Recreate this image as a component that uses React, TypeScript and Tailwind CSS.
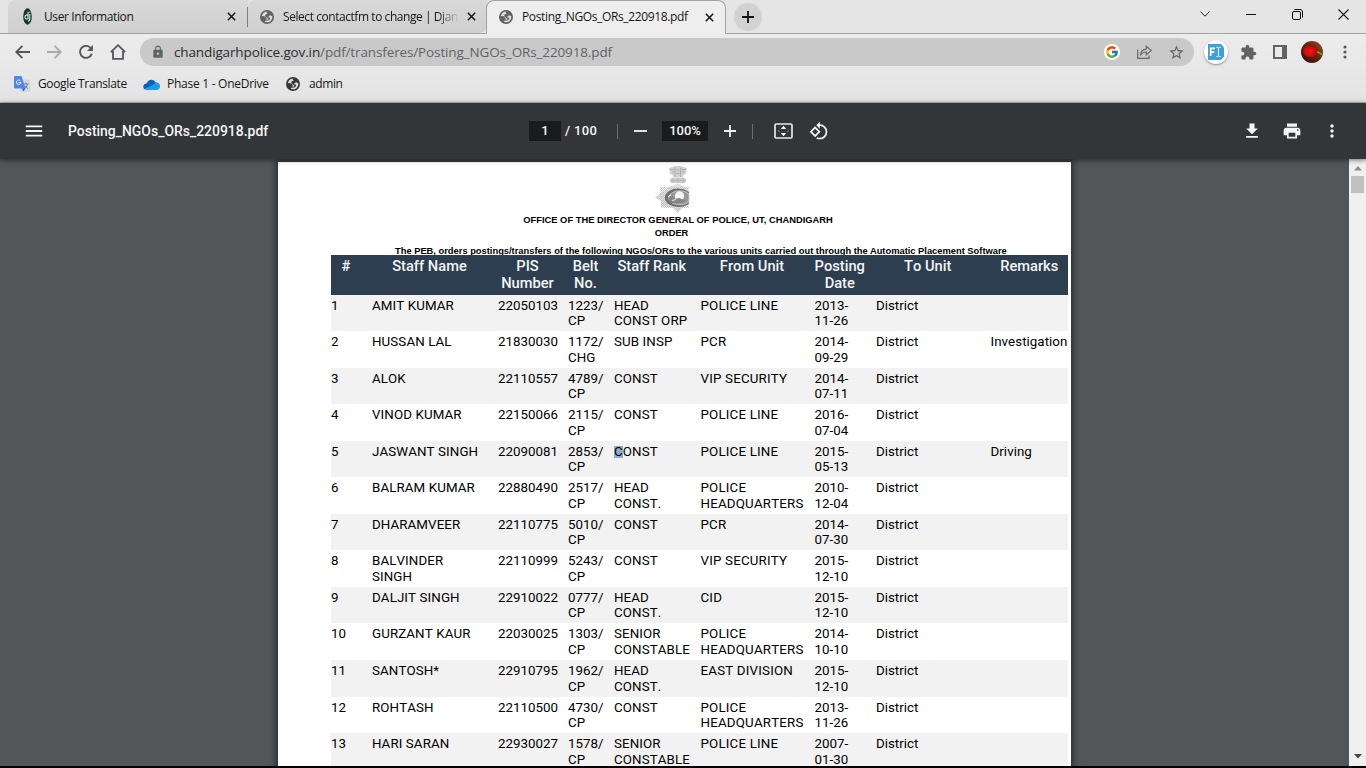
import React from "react";
import { MdLock, MdStarBorder, MdExtension, MdMenu, MdPrint, MdMoreVert, MdFileDownload, MdRotate90DegreesCcw } from "react-icons/md";
import { FcGoogle } from "react-icons/fc";

type Row = [string, string, string, string, string, string, string, string];

const rows: Row[] = [
  ["AMIT KUMAR", "22050103", "1223/|CP", "HEAD|CONST ORP", "POLICE LINE", "2013-|11-26", "District", ""],
  ["HUSSAN LAL", "21830030", "1172/|CHG", "SUB INSP", "PCR", "2014-|09-29", "District", "Investigation"],
  ["ALOK", "22110557", "4789/|CP", "CONST", "VIP SECURITY", "2014-|07-11", "District", ""],
  ["VINOD KUMAR", "22150066", "2115/|CP", "CONST", "POLICE LINE", "2016-|07-04", "District", ""],
  ["JASWANT SINGH", "22090081", "2853/|CP", "CONST", "POLICE LINE", "2015-|05-13", "District", "Driving"],
  ["BALRAM KUMAR", "22880490", "2517/|CP", "HEAD|CONST.", "POLICE|HEADQUARTERS", "2010-|12-04", "District", ""],
  ["DHARAMVEER", "22110775", "5010/|CP", "CONST", "PCR", "2014-|07-30", "District", ""],
  ["BALVINDER|SINGH", "22110999", "5243/|CP", "CONST", "VIP SECURITY", "2015-|12-10", "District", ""],
  ["DALJIT SINGH", "22910022", "0777/|CP", "HEAD|CONST.", "CID", "2015-|12-10", "District", ""],
  ["GURZANT KAUR", "22030025", "1303/|CP", "SENIOR|CONSTABLE", "POLICE|HEADQUARTERS", "2014-|10-10", "District", ""],
  ["SANTOSH*", "22910795", "1962/|CP", "HEAD|CONST.", "EAST DIVISION", "2015-|12-10", "District", ""],
  ["ROHTASH", "22110500", "4730/|CP", "CONST", "POLICE|HEADQUARTERS", "2013-|11-26", "District", ""],
  ["HARI SARAN", "22930027", "1578/|CP", "SENIOR|CONSTABLE", "POLICE LINE", "2007-|01-30", "District", ""],
];

const headers = ["#", "Staff Name", "PIS|Number", "Belt|No.", "Staff Rank", "From Unit", "Posting|Date", "To Unit", "Remarks"];
const SELECTED_ROW = 4;
const RANK_COLUMN = 3;
const columns = "grid grid-cols-[41px_126px_70px_46px_86.5px_114px_61.5px_114.5px_77.5px]";
const cellTracking = [
  "tracking-[0.1px]",
  "",
  "",
  "tracking-[0.1px]",
  "tracking-[0.18px]",
  "",
  "",
  "tracking-[0.05px]",
];

function Lines({ text }: { text: string }) {
  return (
    <>
      {text.split("|").map((line, i) => (
        <div key={i} className="whitespace-nowrap">{line}</div>
      ))}
    </>
  );
}

function Globe({ color }: { color: string }) {
  return (
    <svg width="14" height="14" viewBox="0 0 14 14" className="shrink-0">
      <circle cx="7" cy="7" r="7" fill={color} />
      <path d="M6.3 1.6C4.6 2 3.2 3 2.5 4.4L1.8 6.1L4.6 6.2L6.6 8.1L6.4 9.6L8.2 9.7L8.3 8.6C6.7 8 6.2 6.8 5.2 6.3L5.4 4.5L7.6 3.8L7 2.8Z" fill="#dedede" />
      <path d="M8.4 6.3L10.2 5.2L12.3 6.2C12.5 9 11 11.6 8.2 12.3L5 12L5.2 10.7L8.6 10.6L10.2 9L9.8 7.6L8.6 7.5Z" fill="#dedede" />
    </svg>
  );
}

function Close() {
  return (
    <svg width="9" height="9" viewBox="0 0 9 9" className="shrink-0">
      <path d="M0.8 0.8L8.2 8.2M8.2 0.8L0.8 8.2" stroke="#111" strokeWidth="1.5" />
    </svg>
  );
}

function Slot({ children }: { children: React.ReactNode }) {
  return <div className="flex h-7 w-8 shrink-0 items-center justify-center">{children}</div>;
}

function TabStrip() {
  return (
    <div className="flex h-[34px] shrink-0 border-b border-[#a3a3a6] bg-[#e5e5e5] font-['Open_Sans',sans-serif] text-[12px] text-[#161616]">
      <div className="ml-2 flex h-[33px] w-[240px] shrink-0 items-center rounded-tl-[8px] bg-linear-to-b from-[#d9d9d9] to-[#cfcfcf]">
        <svg width="9" height="17" viewBox="0 0 9 17" className="ml-[15px] shrink-0">
          <ellipse cx="4.5" cy="8.5" rx="4.3" ry="8.3" fill="#143a2b" />
          <path d="M5 3.8V10.8C3.2 11.5 2 10.7 2 9C2 7.4 3.2 6.6 5 7.2M6.8 6V10.5C6.8 12.3 6.2 13 5 13.2M6.8 3.8V4.8" stroke="#e8f1ed" strokeWidth="1.1" fill="none" />
        </svg>
        <span className="ml-[12px] w-[183px] whitespace-nowrap tracking-[-0.4px]">User Information</span>
        <Close />
        <span className="ml-auto h-5 w-px bg-[#7d7d7d]" />
      </div>
      <div className="flex h-[33px] w-[239px] shrink-0 items-center rounded-tl-[8px] rounded-br-[8px] bg-linear-to-b from-[#d9d9d9] to-[#cfcfcf]">
        <span className="ml-3"><Globe color="#5f6368" /></span>
        <span className="ml-[9px] mr-[8px] w-[176px] whitespace-nowrap tracking-[-0.44px] [mask-image:linear-gradient(to_right,black_88%,transparent)]">Select contactfm to change | Djan</span>
        <Close />
      </div>
      <div className="relative -ml-px flex h-[34px] w-[240px] shrink-0 items-center rounded-t-[8px] border border-b-0 border-[#a3a3a6] bg-[#eeeeee] pb-px">
        <span className="ml-3"><Globe color="#5f6368" /></span>
        <span className="ml-[9px] w-[183px] whitespace-nowrap tracking-[-0.36px]">Posting_NGOs_ORs_220918.pdf</span>
        <Close />
      </div>
      <div className="mt-[3px] ml-[8px] flex size-7 items-center justify-center rounded-full bg-[#d2d2d2]">
        <svg width="12" height="12" viewBox="0 0 12 12"><path d="M6 0V12M0 6H12" stroke="#111" strokeWidth="1.8" /></svg>
      </div>
      <div className="ml-auto flex h-[28px] w-[184px]">
        <div className="flex w-[46px] items-center justify-center"><svg width="10" height="6" viewBox="0 0 10 6"><path d="M0.4 0.5L5 5.2L9.6 0.5" stroke="#222" fill="none" /></svg></div>
        <div className="flex w-[46px] items-center justify-center"><svg width="10" height="2" viewBox="0 0 10 2"><path d="M0 1.5H10" stroke="#111" /></svg></div>
        <div className="flex w-[46px] items-center justify-center"><svg width="11" height="11" viewBox="0 0 11 11"><rect x="0.5" y="2.5" width="8" height="8" rx="1.5" fill="none" stroke="#111" /><path d="M2.5 0.5H8C9.6 0.5 10.5 1.4 10.5 3V8.5" stroke="#111" fill="none" /></svg></div>
        <div className="flex w-[46px] items-center justify-center"><svg width="11" height="11" viewBox="0 0 11 11"><path d="M0.5 0.5L10.5 10.5M10.5 0.5L0.5 10.5" stroke="#111" strokeWidth="1.1" /></svg></div>
      </div>
    </div>
  );
}

function AddressBar() {
  return (
    <div className="flex h-9 shrink-0 items-center pl-[6px] text-[#5f6368]">
      <Slot><svg width="15" height="14" viewBox="0 0 15 14"><path d="M15 7H1.6M7.4 0.8L1.3 7L7.4 13.2" stroke="#54575b" strokeWidth="1.9" fill="none" /></svg></Slot>
      <Slot><svg width="15" height="14" viewBox="0 0 15 14"><path d="M0 7H13.4M7.6 0.8L13.7 7L7.6 13.2" stroke="#a9abad" strokeWidth="1.9" fill="none" /></svg></Slot>
      <Slot><svg width="14" height="14" viewBox="0 0 14 14"><path d="M11.9 3.3A6 6 0 1 0 12.8 8.6" stroke="#54575b" strokeWidth="1.9" fill="none" /><path d="M14 0V6H8Z" fill="#54575b" /></svg></Slot>
      <Slot><svg width="16" height="16" viewBox="0 0 16 16"><path d="M0.8 8.2L8 1.2L15.2 8.2M3 7V14.8H13V7" stroke="#54575b" strokeWidth="1.8" fill="none" /></svg></Slot>
      <div className="ml-[6px] flex h-7 w-[1054px] shrink-0 items-center rounded-full bg-[#c9c9c9] pr-[2px]">
        <MdLock className="ml-[11px] size-[14px] shrink-0" />
        <span className="ml-[9px] whitespace-nowrap font-['Open_Sans',sans-serif] text-[13.5px] leading-[15px] tracking-[-0.13px]"><span className="text-[#2a2c2e]">chandigarhpolice.gov.in</span>/pdf/transferes/Posting_NGOs_ORs_220918.pdf</span>
        <div className="ml-auto flex">
          <Slot><span className="flex size-4 items-center justify-center rounded-full bg-white"><FcGoogle className="size-[14px]" /></span></Slot>
          <Slot><svg width="15" height="14" viewBox="0 0 15 14" fill="none" stroke="#66696d" strokeWidth="1.2"><path d="M0.7 4.5V13.3H12V10.5" /><path d="M3.3 10.3C3.8 6.2 6 4.2 9.3 4.1V1.2L14.3 5.6L9.3 9.8V7C6.7 7 4.8 8 3.3 10.3Z" /></svg></Slot>
          <Slot><MdStarBorder className="size-[17px]" /></Slot>
        </div>
      </div>
      <div className="ml-[6px] flex">
        <Slot>
          <span className="flex size-6 items-center justify-center rounded-full bg-white shadow-[0_1px_2px_#0006]">
            <svg width="16" height="16" viewBox="0 0 16 16"><path d="M0 0H13L16 3.5V12.5L13 16H0Z" fill="#409fdb" /><path d="M2.7 12V4.4H7M2.7 8.1H6.3" stroke="#fff" strokeWidth="1.7" fill="none" /><path d="M8.3 3.4H9.5L10.5 4L11.5 3.4H12.7M10.5 4V12M8.3 12.6H9.5L10.5 12L11.5 12.6H12.7" stroke="#fff" strokeWidth="1" fill="none" /></svg>
          </span>
        </Slot>
        <Slot><MdExtension className="size-[17px]" /></Slot>
        <Slot><svg width="14" height="14" viewBox="0 0 14 14"><rect x="1" y="1" width="12" height="12" fill="none" stroke="#5f6368" strokeWidth="2" /><rect x="9" width="5" height="14" fill="#5f6368" /></svg></Slot>
        <Slot><svg width="22" height="22" viewBox="0 0 22 22">
          <defs>
            <radialGradient id="petal"><stop offset="0" stopColor="#f01818" /><stop offset="0.75" stopColor="#cf0a0c" /><stop offset="1" stopColor="#901008" /></radialGradient>
            <linearGradient id="soil" x1="0" y1="1" x2="1" y2="0"><stop offset="0" stopColor="#2c0c04" /><stop offset="0.5" stopColor="#5a260c" /><stop offset="1" stopColor="#8b5529" /></linearGradient>
          </defs>
          <circle cx="11" cy="11" r="11" fill="url(#soil)" />
          <path d="M2 8C3 4.5 7 3.6 9.5 4.4C13 3.8 16.5 6 16.5 10C16.5 14 14 16.5 10 16.5C5 17 0.5 13 2 8Z" fill="url(#petal)" />
          <path d="M16 11.5C18 10.5 19 13 21 13.4" stroke="#7fb51e" strokeWidth="1.5" fill="none" />
        </svg></Slot>
        <Slot><svg width="4" height="14" viewBox="0 0 4 14" className="ml-px" fill="#54575b"><circle cx="2" cy="2" r="1.6" /><circle cx="2" cy="7" r="1.6" /><circle cx="2" cy="12" r="1.6" /></svg></Slot>
      </div>
    </div>
  );
}

function Bookmarks() {
  return (
    <div className="flex h-[33px] shrink-0 items-center border-b border-[#b9b9bb] pl-[14px] pb-[4px] font-['Open_Sans',sans-serif] text-[12px] text-[#161616]">
      <svg width="16" height="16" viewBox="0 0 16 16" className="shrink-0">
        <rect x="6" y="3.5" width="10" height="12" rx="1" fill="#d3d5d8" />
        <path d="M9.5 8H14.5M12 6.5V8M13.5 8C13 10.5 11.5 12 10 12.8M11 9.5C11.8 11 13 12 14 12.5" stroke="#7a8087" fill="none" />
        <path d="M1 0H7.5L11.5 12.5H1A1 1 0 0 1 0 11.5V1A1 1 0 0 1 1 0Z" fill="#4a87ee" />
        <path d="M8 12.5H11.5L9.3 15.5Z" fill="#2e5cc8" />
        <path d="M6.3 4.8A2.2 2.2 0 1 0 6.8 6.5H4.8" stroke="#fff" strokeWidth="1" fill="none" />
      </svg>
      <span className="ml-2 w-[105px] whitespace-nowrap tracking-[-0.35px]">Google Translate</span>
      <svg width="17" height="11" viewBox="0 0 17 11" className="shrink-0">
        <path d="M3.8 4.2C5 0.2 10.5 -1 12.8 3.6L16.3 6.5L9 9L1.4 10.2C-0.8 8.2 0.3 4.5 3.8 4.2Z" fill="#0a62b8" />
        <path d="M3.8 4.2C6 3.8 7.5 5.3 9.3 6.2L12.8 3.6C15.4 3.4 17 5.2 17 7.3C17 9.4 15.6 11 13.6 11H3.9C2.8 11 1.9 10.7 1.3 10L9.3 6.2Z" fill="#209be8" />
      </svg>
      <span className="ml-[7px] w-[119px] whitespace-nowrap tracking-[-0.27px]">Phase 1 - OneDrive</span>
      <Globe color="#36393c" />
      <span className="ml-[9px] tracking-[-0.4px]">admin</span>
    </div>
  );
}

function PdfToolbar() {
  return (
    <div className="relative z-10 flex h-14 shrink-0 items-center bg-[#323639] font-[Roboto,sans-serif] text-[13.95px] font-medium text-[#f5f5f5] shadow-[0_1px_5px_#0000008c]">
      <div className="flex w-[529px] items-center">
        <MdMenu className="ml-[23px] size-[22px]" />
        <span className="ml-[23px]">Posting_NGOs_ORs_220918.pdf</span>
      </div>
      <span className="flex h-5 w-8 items-center justify-center bg-[#191b1c] text-[13px]">1</span>
      <span className="ml-1 w-[52px] text-[13px] tracking-[0.35px]">/&nbsp;100</span>
      <span className="h-[15px] w-px bg-[#6c6f71]" />
      <span className="ml-4 h-[2px] w-[13px] bg-[#e0e0dd]" />
      <span className="ml-[15px] flex h-5 w-[46px] items-center justify-center bg-[#191b1c] text-[13px]">100%</span>
      <svg width="12" height="12" viewBox="0 0 12 12" className="ml-4"><path d="M6 0V12M0 6H12" stroke="#eee" strokeWidth="1.8" /></svg>
      <span className="ml-4 h-[15px] w-px bg-[#6c6f71]" />
      <svg width="19" height="16" viewBox="0 0 19 16" className="ml-[20.5px]"><rect x="1" y="1" width="17" height="14" rx="1.2" fill="none" stroke="#e9e9e7" strokeWidth="1.7" /><path d="M9.5 2.8L12.2 6H6.8ZM9.5 13.2L12.2 10H6.8Z" fill="#f2f2f2" /><circle cx="5" cy="8" r="0.6" fill="#eee" /><circle cx="14" cy="8" r="0.6" fill="#eee" /></svg>
      <MdRotate90DegreesCcw className="ml-[16.5px] size-[20px]" />
      <div className="ml-auto mr-[14px] flex">
        <div className="flex w-10 justify-center"><MdFileDownload className="size-5" /></div>
        <div className="flex w-10 justify-center"><MdPrint className="size-5" /></div>
        <div className="flex w-10 justify-center"><MdMoreVert className="size-5" /></div>
      </div>
    </div>
  );
}

function Emblem() {
  return (
    <svg width="36" height="48" viewBox="0 0 36 48" className="shrink-0">
      <defs>
        <pattern id="weave" width="2" height="2" patternUnits="userSpaceOnUse"><rect width="1" height="1" fill="#bdbdbd" /><rect x="1" y="1" width="1" height="1" fill="#cfcfcf" /></pattern>
      </defs>
      <path d="M14 2.5C17 0.5 20 0 22.5 0C25 0 29 0.5 32 2.5L30.5 8.5H28.5L28 11.5H18L17.3 8.5H15.4Z" fill="#d0d0d0" />
      <path d="M15 3.5H20M26 3.5H31M17 6H19.5M26.5 6H29.5M20 1.5V11M25.5 1.5V11M21.5 4H24.5M21.5 7.5H24.5" stroke="#b0b0b0" fill="none" />
      <rect x="15" y="12" width="16" height="5" rx="2" fill="#cbcbcb" />
      <path d="M16 14.5H30M18 12V17M23 12V17M28 12V17" stroke="#b2b2b2" strokeWidth="0.8" />
      <path d="M5 21H34V42H26L22.5 47L20 42H6V35L0 31.5L5 28Z" fill="url(#weave)" />
      <path d="M14 21L22.5 17.5L31 21L34 26V38L28 42L22.5 47L18 42L6 40V35L0 31.5L5 28Z" fill="#c4c4c4" opacity="0.55" />
      <path d="M34 26.2A13.5 9.2 0 1 0 34 37.4Z" fill="#707070" />
      <path d="M34 28A11 7 0 1 0 34 35.6Z" fill="#999" stroke="#c9c9c9" strokeWidth="0.9" />
      <circle cx="24.5" cy="30" r="4.7" fill="#f4f4f4" />
      <path d="M13 33L17 29.5L20 33L24 32L31 34.5L28 37H16Z" fill="#868686" />
      <path d="M13 30.5L16 29M17 34.5L21 33.5" stroke="#eee" />
    </svg>
  );
}

function Page() {
  return (
    <div className="mt-[3px] ml-[278px] flex h-[620px] w-[793px] shrink-0 flex-col bg-white text-black shadow-[0_0_6px_2px_#00000080]">
      <div className="flex h-[93px] shrink-0 flex-col overflow-hidden font-['Liberation_Sans',sans-serif] text-[9.33px] leading-[13px] font-bold whitespace-nowrap">
        <div className="flex h-[52px] shrink-0 justify-center pt-[4px] pr-[4px]"><Emblem /></div>
        <div className="pl-[7px] text-center tracking-[0.02px]">OFFICE OF THE DIRECTOR GENERAL OF POLICE, UT, CHANDIGARH</div>
        <div className="pr-[6px] text-center">ORDER</div>
        <div className="mt-[5px] pl-[117px]">The PEB, orders postings/transfers of the following NGOs/ORs to the various units carried out through the Automatic Placement Software</div>
      </div>
      <div className="ml-[53px] w-[737px] font-[Roboto,sans-serif] text-[13.33px] [font-kerning:none]">
        <div className={`${columns} h-[39.5px] bg-[#2c3e50] pt-[2.5px] text-center text-[14.67px] leading-[17px] font-medium text-[#f4f4f4]`}>
          {headers.map((h, i) => (
            <div key={h} className={i === 8 ? "" : "pr-[11px]"}><Lines text={h} /></div>
          ))}
        </div>
        {rows.map((row, r) => (
          <div key={r} className={`${columns} h-[36.55px] pt-[3px] leading-[15.6px] ${r % 2 === 0 ? "bg-[#f2f2f2]" : "bg-white"}`}>
            <div>{r + 1}</div>
            {row.map((cell, c) => (
              <div key={c} className={cellTracking[c]}>
                {r === SELECTED_ROW && c === RANK_COLUMN ? (
                  <><span className="inline-block h-[12px] leading-[12px] bg-[#8cb0cc]">{cell[0]}</span>{cell.slice(1)}</>
                ) : (
                  <Lines text={cell} />
                )}
              </div>
            ))}
          </div>
        ))}
      </div>
    </div>
  );
}

function Scrollbar() {
  return (
    <div className="ml-auto flex w-[17px] shrink-0 flex-col items-center bg-[#f0f0f0]">
      <svg width="8" height="5" viewBox="0 0 8 5" className="mt-[7px]"><path d="M4 0L8 4.5H0Z" fill="#8c8c8c" /></svg>
      <span className="mt-[5px] h-[17px] w-[13px] bg-[#c1c1c1]" />
      <svg width="8" height="5" viewBox="0 0 8 5" className="mt-auto mb-[7px]"><path d="M4 4.5L8 0H0Z" fill="#484848" /></svg>
    </div>
  );
}

export default function App() {
  return (
    <div className="flex h-[768px] w-[1366px] flex-col overflow-hidden border-b-2 border-black bg-[#525659]">
      <TabStrip />
      <div className="flex h-[69px] shrink-0 flex-col bg-linear-to-b from-[#ececec] to-[#e3e3e3]">
        <AddressBar />
        <Bookmarks />
      </div>
      <PdfToolbar />
      <div className="flex min-h-0 flex-1 overflow-hidden">
        <Page />
        <Scrollbar />
      </div>
    </div>
  );
}
